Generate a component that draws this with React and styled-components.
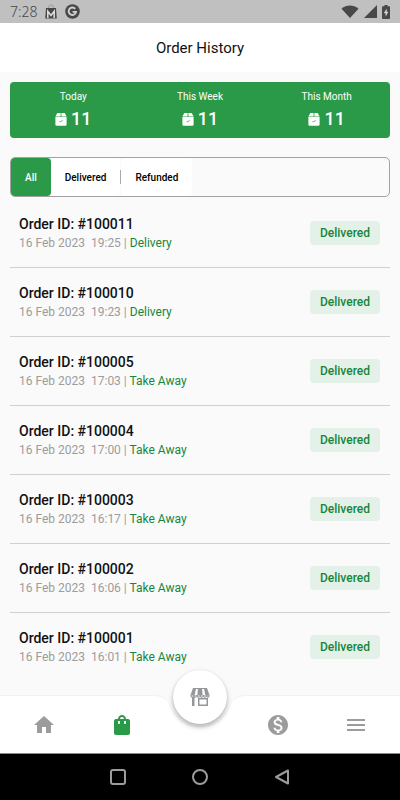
import { useState } from 'react';
import styled, { createGlobalStyle } from 'styled-components';
import {
  MdHome,
  MdMenu,
  MdMonetizationOn,
  MdShoppingBag,
} from 'react-icons/md';

const GlobalStyles = createGlobalStyle`
  :root {
    --color-brand: #2b9a48;
    --color-brand-text: #16863a;
    --color-brand-tint: #e4f1e8;
    --color-page: #fafafa;
    --color-grey-400: #9c9c9c;
    --color-grey-200: #d0d0d0;
  }

  *, *::before, *::after {
    box-sizing: border-box;
  }

  body {
    margin: 0;
    font-family: Roboto, 'Liberation Sans', sans-serif;
    background-color: var(--color-page);
  }

  button {
    font: inherit;
    color: inherit;
    border: none;
    padding: 0;
    background: none;
    cursor: pointer;
  }

  svg {
    display: block;
  }
`;

const Screen = styled.div`
  height: 100vh;
  display: flex;
  flex-direction: column;
  overflow: hidden;
`;

const StatusBar = styled.div`
  display: flex;
  align-items: center;
  justify-content: space-between;
  flex-shrink: 0;
  height: 23px;
  padding: 0 10px;
  background-color: #c0c0c0;
  color: #484848;
`;

const StatusGroup = styled.div`
  display: flex;
  align-items: center;
  gap: ${(props) => props.$gap}px;
`;

const Clock = styled.span`
  font-family: 'Noto Sans', sans-serif;
  font-size: 14px;
  font-weight: 300;
  line-height: 20px;
`;

const Header = styled.header`
  display: flex;
  align-items: center;
  justify-content: center;
  flex-shrink: 0;
  height: 49px;
  background-color: #fff;
`;

const Title = styled.h1`
  margin: 0;
  font-size: 15px;
  font-weight: 400;
  line-height: 20px;
  color: #111;
`;

const Main = styled.main`
  flex: 1;
  min-height: 0;
  overflow: hidden;
  padding: 10px 10px 0;
`;

const Summary = styled.section`
  display: grid;
  grid-template-columns: repeat(3, 1fr);
  height: 56px;
  padding-top: 8px;
  border-radius: 4px;
  background-color: var(--color-brand);
  color: #fff;
`;

const Stat = styled.div`
  display: flex;
  flex-direction: column;
  align-items: center;
  gap: 4px;
`;

const StatLabel = styled.span`
  font-size: 10px;
  line-height: 14px;
`;

const StatValue = styled.span`
  display: flex;
  align-items: center;
  gap: 4px;
  font-size: 18px;
  font-weight: 500;
  line-height: 22px;
`;

const Filters = styled.div`
  display: flex;
  align-items: stretch;
  height: 40px;
  margin-top: 19px;
  border: 1px solid #a2a2a2;
  border-radius: 5px;
`;

const FilterButton = styled.button`
  padding: 0 14px;
  border-radius: 4px;
  font-size: 10px;
  font-weight: 500;
  background-color: ${(props) =>
    props.$active ? 'var(--color-brand)' : '#fff'};
  color: ${(props) => (props.$active ? '#fff' : '#000')};
`;

const Separator = styled.span`
  align-self: center;
  width: 1px;
  height: 14px;
  background-color: #aaa;
`;

const List = styled.ul`
  margin: 2px 0 0;
  padding: 0;
  list-style: none;
`;

const Row = styled.li`
  display: flex;
  align-items: center;
  justify-content: space-between;
  height: 69px;
  padding: 0 10px 0 9px;
  border-bottom: 1px solid var(--color-grey-200);

  &:last-child {
    border-bottom-color: transparent;
  }
`;

const OrderInfo = styled.div`
  padding-top: 2px;
`;

const OrderId = styled.h2`
  margin: 0;
  font-size: 14px;
  font-weight: 500;
  line-height: 19px;
  color: #111;
`;

const OrderMeta = styled.p`
  margin: 0;
  font-size: 12px;
  line-height: 19px;
  color: var(--color-grey-400);
  white-space: pre;
`;

const OrderType = styled.span`
  color: var(--color-brand-text);
`;

const Status = styled.span`
  padding: 0 10px;
  border-radius: 4px;
  font-size: 12px;
  font-weight: 500;
  line-height: 24px;
  color: var(--color-brand-text);
  background-color: var(--color-brand-tint);
`;

const NavBar = styled.nav`
  position: relative;
  display: grid;
  grid-template-columns: repeat(5, 1fr);
  flex-shrink: 0;
  height: 57px;
  padding: 0 5px;
`;

const NavBackdrop = styled.div`
  position: absolute;
  inset: 0;
  display: grid;
  grid-template-columns: 1fr 100px 1fr;
  filter: drop-shadow(0 -1px 0 #f1f1f1);
`;

const NavFill = styled.div`
  background-color: #fff;
`;

const NavButton = styled.button`
  position: relative;
  display: flex;
  align-items: center;
  justify-content: center;
  color: ${(props) =>
    props.$active ? 'var(--color-brand)' : 'var(--color-grey-400)'};
`;

const StoreButton = styled.button`
  position: absolute;
  top: -26px;
  left: 50%;
  transform: translateX(-50%);
  display: flex;
  align-items: center;
  justify-content: center;
  width: 54px;
  height: 54px;
  border-radius: 50%;
  background-color: #fff;
  color: #96979b;
  box-shadow: 0 3px 5px rgba(0, 0, 0, 0.28), 0 0 2px rgba(0, 0, 0, 0.08);
`;

const SystemBar = styled.div`
  display: flex;
  align-items: center;
  justify-content: center;
  gap: 66px;
  flex-shrink: 0;
  height: 47px;
  border-top: 1px solid #8a8a8a;
  background-color: #000;
  color: #8d8d8d;
`;

const stats = [
  { label: 'Today', value: 11 },
  { label: 'This Week', value: 11 },
  { label: 'This Month', value: 11 },
];

const filters = ['All', 'Delivered', 'Refunded'];

const orders = [
  { id: 100011, date: '16 Feb 2023', time: '19:25', type: 'Delivery' },
  { id: 100010, date: '16 Feb 2023', time: '19:23', type: 'Delivery' },
  { id: 100005, date: '16 Feb 2023', time: '17:03', type: 'Take Away' },
  { id: 100004, date: '16 Feb 2023', time: '17:00', type: 'Take Away' },
  { id: 100003, date: '16 Feb 2023', time: '16:17', type: 'Take Away' },
  { id: 100002, date: '16 Feb 2023', time: '16:06', type: 'Take Away' },
  { id: 100001, date: '16 Feb 2023', time: '16:01', type: 'Take Away' },
];

function MailBagIcon() {
  return (
    <svg width="12" height="15" viewBox="0 0 12 15" fill="none">
      <path d="M3.500 4a2.500 3.200 0 0 1 5 0" stroke="#9a9a9a" />
      <path d="M1 4h10l.8 10.500H.2z" fill="currentColor" />
      <path
        d="M2.800 14V7.200L6 11.400l3.200-4.200V14"
        stroke="#e0e0e0"
        strokeWidth="1.500"
      />
    </svg>
  );
}

function GBadgeIcon() {
  return (
    <svg width="15" height="15" viewBox="0 0 15 15" fill="none">
      <circle cx="7.500" cy="7.500" r="7.300" fill="currentColor" />
      <path
        d="M10.200 4.900A3.700 3.700 0 1 0 11 7.900H7.600"
        stroke="#d2d2d2"
        strokeWidth="1.900"
      />
    </svg>
  );
}

function WifiIcon() {
  return (
    <svg width="18" height="13" viewBox="0 0 18 13" fill="currentColor">
      <path d="M.5 3.800C5.500-.6 12.500-.6 17.500 3.800L9 13z" />
    </svg>
  );
}

function SignalIcon() {
  return (
    <svg width="13" height="13" viewBox="0 0 13 13" fill="currentColor">
      <path d="M13 0v13H0z" />
    </svg>
  );
}

function BatteryIcon() {
  return (
    <svg width="8" height="14" viewBox="0 0 8 14">
      <path
        d="M2.500 0h3v1.300H7.200a.8.8 0 0 1 .8.8v11.100a.8.8 0 0 1-.8.8H.8a.8.8 0 0 1-.8-.8V2.100a.8.8 0 0 1 .8-.8h1.700z"
        fill="currentColor"
      />
      <path d="M4.700 3.500L1.800 8.300h1.800v3.400l2.700-4.900H4.700z" fill="#d6d6d6" />
    </svg>
  );
}

function PackageIcon() {
  return (
    <svg width="12" height="13" viewBox="0 0 12 13" fill="none">
      <path d="M2.300 0h3.300v3.500H.4zM6.400 0h3.300l1.900 3.500H6.400z" fill="#fff" />
      <path
        d="M.4 4h11.200v7.600a1.200 1.200 0 0 1-1.200 1.200H1.600A1.200 1.200 0 0 1 .4 11.600z"
        fill="#fff"
      />
      <path
        d="M4.500 8l1.100 1.100 2-2"
        stroke="#2b9a48"
        strokeWidth=".8"
      />
    </svg>
  );
}

function StoreIcon() {
  return (
    <svg width="20" height="18" viewBox="0 0 20 18">
      <path
        d="M3 0h14l2.500 7v1.200a1.600 1.600 0 0 1-3.100.5 1.700 1.700 0 0 1-3.200 0 1.700 1.700 0 0 1-3.200 0 1.700 1.700 0 0 1-3.200 0 1.700 1.700 0 0 1-3.200 0A1.600 1.600 0 0 1 .5 8.200V7z"
        fill="currentColor"
      />
      <path
        d="M5.900 1h2l-.5 6H4.700zM12.100 1h2l1.200 6h-2.700z"
        fill="#fff"
      />
      <path
        d="M1.500 8h17"
        stroke="#fff"
        strokeWidth="1"
        strokeDasharray="1.600 1.600"
      />
      <path d="M2 9h2.500v9H2z" fill="currentColor" />
      <path
        d="M8 10h10v8H8zM9.500 11.500v5h7v-5z"
        fill="currentColor"
        fillRule="evenodd"
      />
    </svg>
  );
}

function FilterGroup({ separated, children }) {
  return (
    <>
      {separated && <Separator />}
      {children}
    </>
  );
}

function Order({ order }) {
  const { id, date, time, type } = order;

  return (
    <Row>
      <OrderInfo>
        <OrderId>Order ID: #{id}</OrderId>
        <OrderMeta>
          {`${date}  ${time} | `}
          <OrderType>{type}</OrderType>
        </OrderMeta>
      </OrderInfo>
      <Status>Delivered</Status>
    </Row>
  );
}

function BottomNav() {
  return (
    <NavBar>
      <NavBackdrop>
        <NavFill />
        <svg width="100" height="57" viewBox="0 0 100 57" fill="#fff">
          <path d="M0 0h3C12 0 17 3 19.500 9a32 32 0 0 0 61 0C83 3 88 0 97 0h3v57H0z" />
        </svg>
        <NavFill />
      </NavBackdrop>
      <NavButton aria-label="Home">
        <MdHome size={24} />
      </NavButton>
      <NavButton aria-label="Orders" $active>
        <MdShoppingBag size={24} />
      </NavButton>
      <span />
      <NavButton aria-label="Wallet">
        <MdMonetizationOn size={24} />
      </NavButton>
      <NavButton aria-label="Menu">
        <MdMenu size={24} />
      </NavButton>
      <StoreButton aria-label="Store">
        <StoreIcon />
      </StoreButton>
    </NavBar>
  );
}

function App() {
  const [activeFilter, setActiveFilter] = useState('All');

  return (
    <>
      <GlobalStyles />
      <Screen>
        <StatusBar>
          <StatusGroup $gap={8}>
            <Clock>7:28</Clock>
            <MailBagIcon />
            <GBadgeIcon />
          </StatusGroup>
          <StatusGroup $gap={5}>
            <WifiIcon />
            <SignalIcon />
            <BatteryIcon />
          </StatusGroup>
        </StatusBar>

        <Header>
          <Title>Order History</Title>
        </Header>

        <Main>
          <Summary>
            {stats.map(({ label, value }) => (
              <Stat key={label}>
                <StatLabel>{label}</StatLabel>
                <StatValue>
                  <PackageIcon />
                  {value}
                </StatValue>
              </Stat>
            ))}
          </Summary>

          <Filters>
            {filters.map((filter, i) => (
              <FilterGroup key={filter} separated={i > 1}>
                <FilterButton
                  $active={filter === activeFilter}
                  onClick={() => setActiveFilter(filter)}
                >
                  {filter}
                </FilterButton>
              </FilterGroup>
            ))}
          </Filters>

          <List>
            {orders.map((order) => (
              <Order key={order.id} order={order} />
            ))}
          </List>
        </Main>

        <BottomNav />

        <SystemBar>
          <NavButton aria-label="Recent apps">
            <svg width="16" height="16" viewBox="0 0 16 16" fill="none">
              <rect
                x="1"
                y="1"
                width="14"
                height="14"
                rx="2"
                stroke="currentColor"
                strokeWidth="2"
              />
            </svg>
          </NavButton>
          <NavButton aria-label="Home screen">
            <svg width="16" height="16" viewBox="0 0 16 16" fill="none">
              <circle
                cx="8"
                cy="8"
                r="7"
                stroke="currentColor"
                strokeWidth="2"
              />
            </svg>
          </NavButton>
          <NavButton aria-label="Back">
            <svg width="16" height="16" viewBox="0 0 16 16" fill="none">
              <path
                d="M14 1.500v13L2 8z"
                stroke="currentColor"
                strokeWidth="2"
                strokeLinejoin="round"
              />
            </svg>
          </NavButton>
        </SystemBar>
      </Screen>
    </>
  );
}

export default App;
